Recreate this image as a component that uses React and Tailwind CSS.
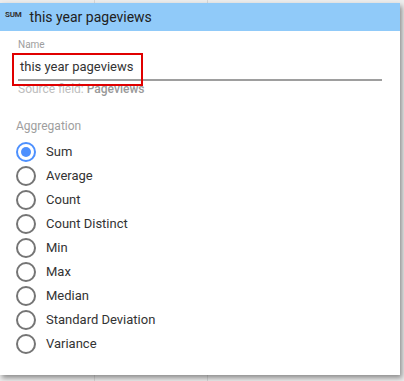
import React from 'react';

const options = ['Sum', 'Average', 'Count', 'Count Distinct', 'Min', 'Max', 'Median', 'Standard Deviation', 'Variance'];

const Radio = ({ checked }) => (
  <span
    className={`flex h-[20px] w-[20px] shrink-0 items-center justify-center rounded-full border-2 ${
      checked ? 'border-[#4d90fe]' : 'border-[#757575]'
    }`}
  >
    {checked && <span className="h-[10px] w-[10px] rounded-full bg-[#4d90fe]" />}
  </span>
);

export default function App() {
  return (
    <div className="relative h-[381px] w-[404px] overflow-hidden bg-[#ececec] font-['Roboto',sans-serif]">
      {/* backdrop columns */}
      <div className="flex h-full">
        <div className="w-[95px] border-r border-[#d6d6d6]" />
        <div className="w-[113px] border-r border-[#d6d6d6]" />
        <div className="flex-1" />
      </div>

      {/* popup */}
      <div className="absolute left-0 top-[3px] h-[372px] w-[400px] bg-white shadow-[2px_3px_5px_rgba(0,0,0,0.4)]">
        <div className="flex h-[28px] items-center bg-[#90caf9] pl-[5px]">
          <span className="mr-[8px] -mt-[4px] text-[8px] font-bold tracking-tight text-[#333]">SUM</span>
          <span className="text-[14px] text-[#212121]">this year pageviews</span>
        </div>

        <div className="pl-[18px] pr-[18px] pt-[8px]">
          <div className="text-[10px] leading-[12px] text-[#9e9e9e]">Name</div>
          <div className="relative">
            <div className="border-b-2 border-[#9e9e9e] pb-[4px] pl-[2px] pt-[7px] text-[13px] leading-[17px] text-[#333]">
              this year pageviews
            </div>
            <div className="absolute left-[-6px] top-[2px] h-[33px] w-[131px] border-2 border-[#e00000]" />
          </div>
          <div className="pt-[1px] text-[12px] leading-[14px] text-[#bdbdbd]">
            Source field: <span className="font-medium text-[#999]">Pageviews</span>
          </div>
        </div>

        <div className="pl-[16px] pt-[23px]">
          <div className="mb-[7px] text-[12px] leading-[14px] text-[#9e9e9e]">Aggregation</div>
          <div className="flex flex-col">
            {options.map((o, i) => (
              <div key={o} className="flex h-[24px] items-center gap-[10px]">
                <Radio checked={i === 0} />
                <span className="text-[13px] text-[#333]">{o}</span>
              </div>
            ))}
          </div>
        </div>
      </div>
    </div>
  );
}
